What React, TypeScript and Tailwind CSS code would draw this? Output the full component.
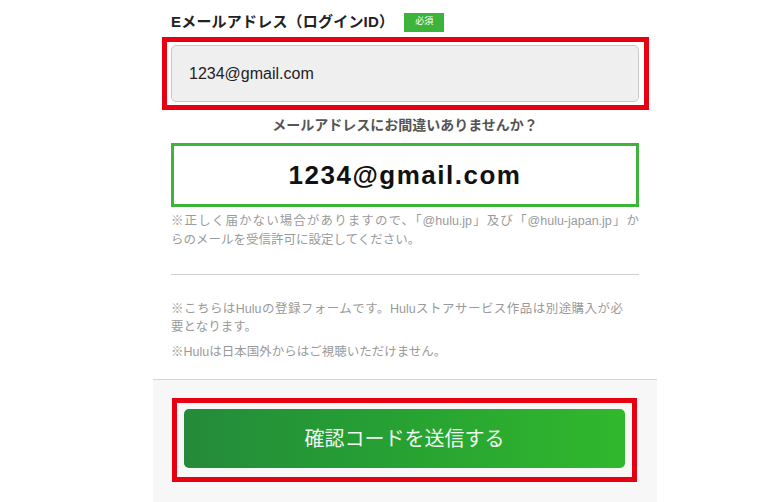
export default function App() {
  return (
    <div
      className="w-[780px] h-[502px] overflow-hidden bg-white flex justify-center"
      style={{ fontFamily: '"Liberation Sans", "Noto Sans CJK JP", sans-serif' }}
    >
      <div className="w-[504px] ml-[30px] flex flex-col">
        <div className="px-[18px] pt-[12px]">
          {/* label */}
          <div className="flex items-center h-[20px]">
            <span className="text-[15px] font-bold text-[#222] tracking-[0.2px]">Eメールアドレス（ログインID）</span>
            <span className="ml-[10px] w-[40px] h-[19px] bg-[#3cb43c] text-white text-[9px] flex items-center justify-center">
              必須
            </span>
          </div>

          {/* email input with red annotation */}
          <div className="mt-[5px] ml-[-9px] mr-[-10px] border-[5px] border-[#e60012] pl-[4px] pr-[5px] py-[3px]">
            <div className="h-[57px] bg-[#efefef] border border-[#c9c9c9] rounded-[5px] flex items-center pl-[17px] text-[16px] text-[#222]">
              1234@gmail.com
            </div>
          </div>

          <p className="mt-[6px] text-center text-[14px] font-bold text-[#555] leading-[18px]">
            メールアドレスにお間違いありませんか？
          </p>

          {/* confirmation */}
          <div className="mt-[9px] h-[64px] border-[3px] border-[#3fb43a] flex items-center justify-center text-[26px] font-bold text-[#111] tracking-[1.5px]">
            1234@gmail.com
          </div>

          <div className="mt-[5px] text-[12.5px] leading-[19px] text-[#9a9a9a]">
            <div className="[text-align-last:justify]">
              ※正しく届かない場合がありますので、「@hulu.jp」及び「@hulu-japan.jp」か
            </div>
            <div>らのメールを受信許可に設定してください。</div>
          </div>

          <div className="mt-[24px] h-px bg-[#cfcfcf]" />

          <div className="mt-[25px] text-[12.5px] leading-[18px] text-[#9a9a9a]">
            <div className="[text-align-last:justify] pr-[16px]">
              ※こちらはHuluの登録フォームです。Huluストアサービス作品は別途購入が必
            </div>
            <div>要となります。</div>
            <div className="mt-[7px]">※Huluは日本国外からはご視聴いただけません。</div>
          </div>
        </div>

        {/* bottom action area */}
        <div className="mt-[18px] flex-1 bg-[#f7f7f7] border-t border-[#d6d6d6] pt-[18px] pl-[19px] pr-[20px]">
          <div className="border-[5px] border-[#e60012] pt-[6px] pb-[9px] pl-[7px] pr-[7px]">
            <button className="w-full h-[59px] rounded-[5px] bg-gradient-to-r from-[#238b3a] via-[#27a232] to-[#31b82c] text-[#eef8ee] text-[20px] flex items-center justify-center">
              確認コードを送信する
            </button>
          </div>
        </div>
      </div>
    </div>
  );
}
